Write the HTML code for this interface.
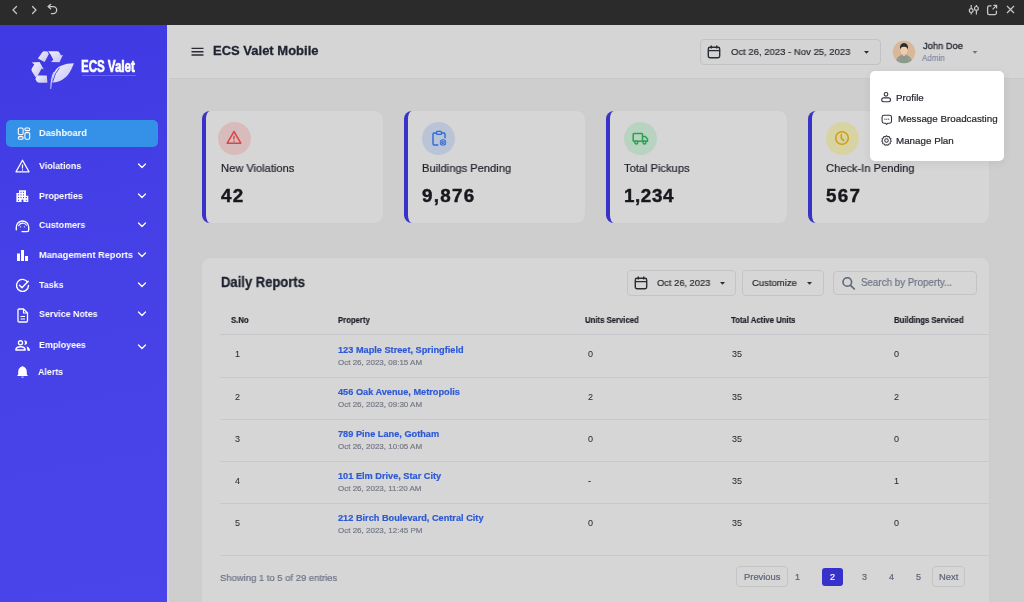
<!DOCTYPE html>
<html><head><meta charset="utf-8"><style>
html,body{margin:0;padding:0;width:1024px;height:602px;overflow:hidden;background:#cdcdcd;font-family:"Liberation Sans", sans-serif;position:relative}
.t{position:absolute;line-height:1;white-space:nowrap;will-change:transform;-webkit-text-stroke:0.2px currentColor}
svg{overflow:visible}
</style></head><body>
<div style="position:absolute;left:0px;top:0px;width:1024px;height:25px;background:#2b2b2b"></div>
<svg style="position:absolute;left:10px;top:4px;" width="10" height="12" viewBox="0 0 10 12"><path d="M6.5 2.5 L3 6 L6.5 9.5" fill="none" stroke="#c8c8c8" stroke-width="1.3" stroke-linecap="round" stroke-linejoin="round"/></svg>
<svg style="position:absolute;left:29px;top:4px;" width="10" height="12" viewBox="0 0 10 12"><path d="M3.5 2.5 L7 6 L3.5 9.5" fill="none" stroke="#c8c8c8" stroke-width="1.3" stroke-linecap="round" stroke-linejoin="round"/></svg>
<svg style="position:absolute;left:45px;top:2px;" width="14" height="14" viewBox="0 0 14 14"><path d="M3.2 4.6 H8.2 A3.5 3.5 0 0 1 8.2 11.6 H6.4" fill="none" stroke="#c8c8c8" stroke-width="1.3" stroke-linecap="round"/><path d="M5.6 2.4 L3.2 4.6 L5.6 6.8" fill="none" stroke="#c8c8c8" stroke-width="1.3" stroke-linecap="round" stroke-linejoin="round"/></svg>
<svg style="position:absolute;left:967px;top:4px;" width="14" height="12" viewBox="0 0 14 12"><path d="M4.2 1 V4.5 M4.2 8.8 V10.5 M9.4 1 V2.5 M9.4 6.8 V10.5" stroke="#c8c8c8" stroke-width="1.2" fill="none"/><circle cx="4.2" cy="6.6" r="1.9" fill="none" stroke="#c8c8c8" stroke-width="1.2"/><circle cx="9.4" cy="4.4" r="1.9" fill="none" stroke="#c8c8c8" stroke-width="1.2"/></svg>
<svg style="position:absolute;left:985px;top:3px;" width="14" height="14" viewBox="0 0 14 14"><path d="M6.5 2.8 H4.2 A1.6 1.6 0 0 0 2.6 4.4 V10 A1.6 1.6 0 0 0 4.2 11.6 H9.8 A1.6 1.6 0 0 0 11.4 10 V7.8" fill="none" stroke="#c8c8c8" stroke-width="1.3"/><path d="M7.6 6.4 L11.4 2.6 M8.4 2.4 H11.6 V5.6" fill="none" stroke="#c8c8c8" stroke-width="1.2"/></svg>
<svg style="position:absolute;left:1005px;top:4px;" width="11" height="11" viewBox="0 0 11 11"><path d="M2 2 L9 9 M9 2 L2 9" stroke="#c8c8c8" stroke-width="1.2"/></svg>
<div style="position:absolute;left:0px;top:25px;width:167px;height:577px;background:linear-gradient(170deg,#3e39e2 0%,#4641e7 45%,#4a45ea 100%)"></div>
<div style="position:absolute;left:167px;top:25px;width:2px;height:577px;background:#d5d5d5"></div>
<svg style="position:absolute;left:28px;top:46px;" width="50" height="46" viewBox="0 0 50 46"><defs><linearGradient id="lg" x1="0" y1="0" x2="1" y2="1"><stop offset="0" stop-color="#f4f3ff"/><stop offset="1" stop-color="#c3c0f2"/></linearGradient></defs>
<g fill="url(#lg)">
<path d="M9.9 12.6 L14.1 6.5 Q15 5.2 16.4 5.2 L19.5 5.4 L20.8 8.2 L16.6 16 Z"/>
<path d="M20 5.2 L29.5 5.2 Q30.8 5.3 31.6 6.8 L33 9.6 L35 8.8 L31.5 16.2 L23 16 L25.3 13.8 L22.6 8.4 Z"/>
<path d="M3.6 16.4 L11.6 16 L15.8 23.4 L13.6 22.4 L9.8 29.4 L7.6 31.2 L4 25.5 Q3 24 3.8 22.4 L6.4 18.2 Z"/>
<path d="M8.9 29.4 L18.8 29.4 L19.4 36.7 L11 36.7 Q9.4 36.7 8.6 35.3 L7.4 33 Z"/>
<path d="M24.3 36.4 C24 29 27 22.5 32.5 20 C37 18 41.5 17.3 46 17.3 C44.5 21 42.8 25.2 40 28.8 C36.8 32.8 31.5 36.6 24.3 36.4 Z"/>
<path d="M22.4 43 Q22.2 33.5 25.3 26 L26 26.3 Q23.4 33.5 23.2 43 Z"/>
</g><path d="M24.8 35.6 Q26.5 27 31.5 21.8" fill="none" stroke="#4a44d8" stroke-width="0.9"/></svg>
<div class="t" style="left:81.3px;top:59.4px;font-size:16px;line-height:1;color:#fff;font-weight:bold;transform:scaleX(0.72);transform-origin:0 0;letter-spacing:0px;-webkit-text-stroke:0.7px #fff">ECS Valet</div>
<div style="position:absolute;left:82px;top:74.5px;width:54px;height:1.5px;background:rgba(230,230,255,0.25)"></div>
<div style="position:absolute;left:6px;top:120px;width:152px;height:27px;background:#3590e8;border-radius:5px"></div>
<svg style="position:absolute;left:17px;top:127px;" width="14" height="13" viewBox="0 0 14 13"><g fill="none" stroke="#fff" stroke-width="1.05"><rect x="1.3" y="1" width="4.8" height="6.6" rx="1.2"/><rect x="1.3" y="9.6" width="4.8" height="2.6" rx="1"/><rect x="7.9" y="1" width="4.8" height="2.6" rx="1"/><rect x="7.9" y="5.6" width="4.8" height="6.6" rx="1.2"/></g></svg>
<div class="t" style="left:39.0px;top:128.07px;font-size:9.6px;color:#ffffff;font-weight:bold;transform:scaleX(0.955);transform-origin:0 0;-webkit-text-stroke:0;">Dashboard</div>
<div class="t" style="left:39.0px;top:161.27px;font-size:9.6px;color:#ffffff;font-weight:bold;transform:scaleX(0.925);transform-origin:0 0;-webkit-text-stroke:0;">Violations</div>
<svg style="position:absolute;left:137px;top:162px;" width="10" height="8" viewBox="0 0 10 8"><path d="M1.5 2 L5 5.5 L8.5 2" fill="none" stroke="#fff" stroke-width="1.3" stroke-linecap="round" stroke-linejoin="round"/></svg>
<div class="t" style="left:39.0px;top:190.87px;font-size:9.6px;color:#ffffff;font-weight:bold;transform:scaleX(0.925);transform-origin:0 0;-webkit-text-stroke:0;">Properties</div>
<svg style="position:absolute;left:137px;top:192px;" width="10" height="8" viewBox="0 0 10 8"><path d="M1.5 2 L5 5.5 L8.5 2" fill="none" stroke="#fff" stroke-width="1.3" stroke-linecap="round" stroke-linejoin="round"/></svg>
<div class="t" style="left:39.0px;top:220.27px;font-size:9.6px;color:#ffffff;font-weight:bold;transform:scaleX(0.925);transform-origin:0 0;-webkit-text-stroke:0;">Customers</div>
<svg style="position:absolute;left:137px;top:221px;" width="10" height="8" viewBox="0 0 10 8"><path d="M1.5 2 L5 5.5 L8.5 2" fill="none" stroke="#fff" stroke-width="1.3" stroke-linecap="round" stroke-linejoin="round"/></svg>
<div class="t" style="left:39.0px;top:249.87px;font-size:9.6px;color:#ffffff;font-weight:bold;transform:scaleX(0.963);transform-origin:0 0;-webkit-text-stroke:0;">Management Reports</div>
<svg style="position:absolute;left:137px;top:251px;" width="10" height="8" viewBox="0 0 10 8"><path d="M1.5 2 L5 5.5 L8.5 2" fill="none" stroke="#fff" stroke-width="1.3" stroke-linecap="round" stroke-linejoin="round"/></svg>
<div class="t" style="left:39.0px;top:279.87px;font-size:9.6px;color:#ffffff;font-weight:bold;transform:scaleX(0.925);transform-origin:0 0;-webkit-text-stroke:0;">Tasks</div>
<svg style="position:absolute;left:137px;top:281px;" width="10" height="8" viewBox="0 0 10 8"><path d="M1.5 2 L5 5.5 L8.5 2" fill="none" stroke="#fff" stroke-width="1.3" stroke-linecap="round" stroke-linejoin="round"/></svg>
<div class="t" style="left:39.0px;top:309.47px;font-size:9.6px;color:#ffffff;font-weight:bold;transform:scaleX(0.925);transform-origin:0 0;-webkit-text-stroke:0;">Service Notes</div>
<svg style="position:absolute;left:137px;top:310px;" width="10" height="8" viewBox="0 0 10 8"><path d="M1.5 2 L5 5.5 L8.5 2" fill="none" stroke="#fff" stroke-width="1.3" stroke-linecap="round" stroke-linejoin="round"/></svg>
<div class="t" style="left:39.0px;top:339.57px;font-size:9.6px;color:#ffffff;font-weight:bold;transform:scaleX(0.925);transform-origin:0 0;-webkit-text-stroke:0;">Employees</div>
<svg style="position:absolute;left:137px;top:343px;" width="10" height="8" viewBox="0 0 10 8"><path d="M1.5 2 L5 5.5 L8.5 2" fill="none" stroke="#fff" stroke-width="1.3" stroke-linecap="round" stroke-linejoin="round"/></svg>
<div class="t" style="left:38.0px;top:366.87px;font-size:9.6px;color:#ffffff;font-weight:bold;transform:scaleX(0.925);transform-origin:0 0;-webkit-text-stroke:0;">Alerts</div>
<svg style="position:absolute;left:15px;top:159px;" width="15" height="14" viewBox="0 0 15 14"><path d="M7.5 1.2 L14 12.8 H1 Z" fill="none" stroke="#fff" stroke-width="1.3" stroke-linejoin="round"/><path d="M7.5 5.5 V9.5" stroke="#fff" stroke-width="1.2"/><circle cx="7.5" cy="11" r="0.7" fill="#fff"/></svg>
<svg style="position:absolute;left:16px;top:189px;" width="13" height="14" viewBox="0 0 13 14"><path d="M0.4 13 V4 H3 V1.2 H10 V6.8 H12.3 V13 Z" fill="#fff"/><g fill="#3f3be3"><rect x="4.45" y="2.75" width="1.1" height="1.1"/><rect x="6.95" y="2.75" width="1.1" height="1.1"/><rect x="1.95" y="5.3500000000000005" width="1.1" height="1.1"/><rect x="4.45" y="5.3500000000000005" width="1.1" height="1.1"/><rect x="6.95" y="5.3500000000000005" width="1.1" height="1.1"/><rect x="1.95" y="8.049999999999999" width="1.1" height="1.1"/><rect x="4.45" y="8.049999999999999" width="1.1" height="1.1"/><rect x="6.95" y="8.049999999999999" width="1.1" height="1.1"/><rect x="9.75" y="8.049999999999999" width="1.1" height="1.1"/><rect x="1.95" y="10.75" width="1.1" height="1.1"/><rect x="9.75" y="10.75" width="1.1" height="1.1"/><rect x="5.6" y="10.6" width="1.8" height="2.5"/></g></svg>
<svg style="position:absolute;left:15px;top:220px;" width="15" height="13" viewBox="0 0 15 13"><path d="M1.3 9.8 V7.2 A6.2 6.2 0 0 1 13.7 7.2 V9.9 Q13.7 11.6 12 11.6 H7" fill="none" stroke="#fff" stroke-width="1.35" stroke-linecap="round"/><path d="M3.6 5.8 Q4.9 3.2 7.2 3.1 M7.6 3 Q10.2 3.3 11.4 5.2" fill="none" stroke="#fff" stroke-width="1.1" stroke-linecap="round"/><circle cx="5.6" cy="6.8" r="0.65" fill="#fff"/><circle cx="9.4" cy="6.8" r="0.65" fill="#fff"/></svg>
<svg style="position:absolute;left:16px;top:249px;" width="13" height="13" viewBox="0 0 13 13"><g fill="#fff"><rect x="1" y="4.5" width="3" height="7.5"/><rect x="5" y="1" width="3" height="11"/><rect x="9" y="7" width="3" height="5"/></g></svg>
<svg style="position:absolute;left:15px;top:278px;" width="15" height="15" viewBox="0 0 15 15"><path d="M12.6 4.2 A6 6 0 1 0 13.5 7.5" fill="none" stroke="#fff" stroke-width="1.4" stroke-linecap="round"/><path d="M4.5 7.2 L7 9.8 L13.2 3.2" fill="none" stroke="#fff" stroke-width="1.4" stroke-linecap="round" stroke-linejoin="round"/></svg>
<svg style="position:absolute;left:16px;top:308px;" width="13" height="15" viewBox="0 0 13 15"><path d="M2 2.2 Q2 1 3.2 1 H7.5 L11.5 5 V12.8 Q11.5 14 10.3 14 H3.2 Q2 14 2 12.8 Z" fill="none" stroke="#fff" stroke-width="1.3" stroke-linejoin="round"/><path d="M7.5 1 V5 H11.5" fill="none" stroke="#fff" stroke-width="1.1"/><path d="M4.5 8.5 H9 M4.5 11 H9" stroke="#fff" stroke-width="1.2"/></svg>
<svg style="position:absolute;left:14px;top:339px;" width="17" height="12" viewBox="0 0 17 12"><circle cx="6.5" cy="3.8" r="2.05" fill="none" stroke="#fff" stroke-width="1.3"/><path d="M1.8 11 Q1.8 7.7 6.5 7.7 Q11.2 7.7 11.2 11 Z" fill="none" stroke="#fff" stroke-width="1.35" stroke-linejoin="round"/><path d="M10.3 1.2 Q13.2 1.6 13.2 3.6 Q13.2 5.7 10.3 6.1 Q11.6 3.6 10.3 1.2 Z" fill="#fff"/><path d="M12.5 7.4 Q16 8 16 11.7 H13.4 Q13.4 9.2 12.5 7.4 Z" fill="#fff"/></svg>
<svg style="position:absolute;left:16px;top:365px;" width="13" height="13" viewBox="0 0 13 13"><path d="M6.5 1 Q6.5 0.5 7 1.5 Q10.8 2.5 10.8 7 V9.5 L12 11 H1 L2.2 9.5 V7 Q2.2 2.5 6 1.5 Z" fill="#fff"/><path d="M5 11.8 Q6.5 13.5 8 11.8 Z" fill="#fff"/></svg>
<div style="position:absolute;left:169px;top:25px;width:855px;height:53px;background:#d5d5d5"></div>
<div style="position:absolute;left:169px;top:78px;width:855px;height:1px;background:#c9c9c9"></div>
<div style="position:absolute;left:169px;top:79px;width:855px;height:523px;background:#cecece"></div>
<svg style="position:absolute;left:190px;top:46px;" width="15" height="11" viewBox="0 0 15 11"><path d="M1.5 2.4 H13.5 M1.5 5.7 H13.5 M1.5 9 H13.5" stroke="#2a2c33" stroke-width="1.35"/></svg>
<div class="t" style="left:212.5px;top:43.80px;font-size:13.0px;color:#1f2230;font-weight:bold;-webkit-text-stroke:0.3px currentColor;">ECS Valet Mobile</div>
<div style="position:absolute;left:700px;top:39px;width:181px;height:26px;border:1px solid #c2c2c2;border-radius:4px;box-sizing:border-box;background:#d4d4d4"></div>
<svg style="position:absolute;left:707px;top:45px;" width="14" height="14" viewBox="0 0 14 14"><rect x="1.3" y="2.3" width="11.4" height="10.4" rx="1.6" fill="none" stroke="#2a2c33" stroke-width="1.4"/><path d="M1.3 5.6 H12.7 M4.3 0.6 V3.5 M9.7 0.6 V3.5" stroke="#2a2c33" stroke-width="1.4"/></svg>
<div class="t" style="left:730.5px;top:46.82px;font-size:9.9px;color:#2a2c33;font-weight:normal;transform:scaleX(0.963);transform-origin:0 0;">Oct 26, 2023 - Nov 25, 2023</div>
<svg style="position:absolute;left:863px;top:50px;" width="7" height="5" viewBox="0 0 7 5"><path d="M1 1 H6 L3.5 3.8 Z" fill="#2a2c33"/></svg>
<svg style="position:absolute;left:892px;top:40px;" width="24" height="24" viewBox="0 0 24 24"><circle cx="12" cy="12" r="11.2" fill="#d8b898"/>
<clipPath id="av"><circle cx="12" cy="12" r="11.2"/></clipPath>
<g clip-path="url(#av)"><path d="M3.5 24 Q4 15 12 14.5 Q20 15 20.5 24 Z" fill="#8c9a8e"/><path d="M10 13 H14 L13 16 H11 Z" fill="#e2bfa2"/><ellipse cx="12" cy="10" rx="3.5" ry="3.9" fill="#efcdb0"/><path d="M8 9.8 Q7.4 3 12 3 Q16.6 3 16 9.8 Q15.2 6.6 12 6.8 Q8.8 6.6 8 9.8 Z" fill="#2b2c30"/><circle cx="7.5" cy="19" r="0.5" fill="#7fe08a"/><circle cx="16.5" cy="19" r="0.5" fill="#7fe08a"/></g></svg>
<div class="t" style="left:922.5px;top:40.97px;font-size:9.6px;color:#2e3139;font-weight:normal;transform:scaleX(0.97);transform-origin:0 0;-webkit-text-stroke:0.35px currentColor;">John Doe</div>
<div class="t" style="left:922.3px;top:53.80px;font-size:8.5px;color:#8088a3;font-weight:normal;transform:scaleX(0.94);transform-origin:0 0;">Admin</div>
<svg style="position:absolute;left:971px;top:50px;" width="8" height="5" viewBox="0 0 8 5"><path d="M1.5 1 H6.5 L4 3.8 Z" fill="#6d7388"/></svg>
<div style="position:absolute;left:202px;top:111px;width:181px;height:112px;background:#d6d6d6;border-radius:8px;border-left:4px solid #3832c8;box-sizing:border-box;box-shadow:0 0 1px rgba(0,0,0,0.06)"></div>
<div style="position:absolute;left:218px;top:122px;width:33px;height:33px;background:#d8bcbc;border-radius:50%"></div>
<div class="t" style="left:221.0px;top:162.83px;font-size:11.3px;color:#1f2128;font-weight:normal;transform:scaleX(0.985);transform-origin:0 0;">New Violations</div>
<div class="t" style="left:221.0px;top:187.29px;font-size:18.8px;color:#17181d;font-weight:bold;letter-spacing:1.3px;-webkit-text-stroke:0.45px currentColor;">42</div>
<div style="position:absolute;left:404px;top:111px;width:181px;height:112px;background:#d6d6d6;border-radius:8px;border-left:4px solid #3832c8;box-sizing:border-box;box-shadow:0 0 1px rgba(0,0,0,0.06)"></div>
<div style="position:absolute;left:422px;top:122px;width:33px;height:33px;background:#b9c5d6;border-radius:50%"></div>
<div class="t" style="left:422.0px;top:162.83px;font-size:11.3px;color:#1f2128;font-weight:normal;transform:scaleX(0.985);transform-origin:0 0;">Buildings Pending</div>
<div class="t" style="left:422.0px;top:187.29px;font-size:18.8px;color:#17181d;font-weight:bold;letter-spacing:1.3px;-webkit-text-stroke:0.45px currentColor;">9,876</div>
<div style="position:absolute;left:606px;top:111px;width:181px;height:112px;background:#d6d6d6;border-radius:8px;border-left:4px solid #3832c8;box-sizing:border-box;box-shadow:0 0 1px rgba(0,0,0,0.06)"></div>
<div style="position:absolute;left:624px;top:122px;width:33px;height:33px;background:#b8d3bf;border-radius:50%"></div>
<div class="t" style="left:624.0px;top:162.83px;font-size:11.3px;color:#1f2128;font-weight:normal;transform:scaleX(0.985);transform-origin:0 0;">Total Pickups</div>
<div class="t" style="left:624.0px;top:187.29px;font-size:18.8px;color:#17181d;font-weight:bold;letter-spacing:0.6px;-webkit-text-stroke:0.45px currentColor;">1,234</div>
<div style="position:absolute;left:808px;top:111px;width:181px;height:112px;background:#d6d6d6;border-radius:8px;border-left:4px solid #3832c8;box-sizing:border-box;box-shadow:0 0 1px rgba(0,0,0,0.06)"></div>
<div style="position:absolute;left:826px;top:122px;width:33px;height:33px;background:#d8d3a2;border-radius:50%"></div>
<div class="t" style="left:826.0px;top:162.83px;font-size:11.3px;color:#1f2128;font-weight:normal;transform:scaleX(0.985);transform-origin:0 0;">Check-In Pending</div>
<div class="t" style="left:826.0px;top:187.29px;font-size:18.8px;color:#17181d;font-weight:bold;letter-spacing:1.3px;-webkit-text-stroke:0.45px currentColor;">567</div>
<svg style="position:absolute;left:226px;top:130px;" width="16" height="15" viewBox="0 0 16 15"><path d="M8 1.5 L14.8 13.2 H1.2 Z" fill="none" stroke="#d64848" stroke-width="1.5" stroke-linejoin="round"/><path d="M8 5.8 V9.4" stroke="#d64848" stroke-width="1.4"/><circle cx="8" cy="11.2" r="0.8" fill="#d64848"/></svg>
<svg style="position:absolute;left:431px;top:130px;" width="16" height="16" viewBox="0 0 16 16"><path d="M5.3 3 H3.2 Q2 3 2 4.2 V13.8 Q2 15 3.2 15 H7.3 M10.7 3 H12.8 Q14 3 14 4.2 V8.3" fill="none" stroke="#2c69d8" stroke-width="1.4"/><rect x="5.5" y="1.4" width="5" height="3" rx="1" fill="none" stroke="#2c69d8" stroke-width="1.3"/><circle cx="12" cy="12.4" r="3.2" fill="#2c69d8"/><circle cx="12" cy="12.4" r="2.1" fill="none" stroke="#b9c5d6" stroke-width="0.6"/><path d="M12 11.2 V12.6 L12.9 13.2" stroke="#b9c5d6" stroke-width="0.7" fill="none"/></svg>
<svg style="position:absolute;left:632px;top:132px;" width="17" height="13" viewBox="0 0 17 13"><rect x="1.2" y="1.5" width="9.3" height="7.8" rx="0.8" fill="none" stroke="#28a250" stroke-width="1.5"/><path d="M10.5 4.5 H13.2 L15.5 7 V9.3 H10.5" fill="none" stroke="#28a250" stroke-width="1.5" stroke-linejoin="round"/><circle cx="4.3" cy="10.5" r="1.5" fill="#b8d3bf" stroke="#28a250" stroke-width="1.4"/><circle cx="12.5" cy="10.5" r="1.5" fill="#b8d3bf" stroke="#28a250" stroke-width="1.4"/></svg>
<svg style="position:absolute;left:834px;top:130px;" width="16" height="16" viewBox="0 0 16 16"><circle cx="8" cy="8" r="6.3" fill="none" stroke="#cf9f14" stroke-width="1.5"/><path d="M7.3 4.5 V8.3 L9.8 10.6" fill="none" stroke="#cf9f14" stroke-width="1.5" stroke-linecap="round"/></svg>
<div style="position:absolute;left:202px;top:258px;width:787px;height:360px;background:#d6d6d6;border-radius:8px;box-shadow:0 0 1px rgba(0,0,0,0.08)"></div>
<div class="t" style="left:220.5px;top:275.15px;font-size:14.0px;color:#1f2230;font-weight:bold;transform:scaleX(0.93);transform-origin:0 0;-webkit-text-stroke:0.3px currentColor;">Daily Reports</div>
<div style="position:absolute;left:627px;top:270px;width:109px;height:26px;border:1px solid #c4c4c4;border-radius:4px;box-sizing:border-box"></div>
<svg style="position:absolute;left:634px;top:276px;" width="14" height="14" viewBox="0 0 14 14"><rect x="1.3" y="2.3" width="11.4" height="10.4" rx="1.6" fill="none" stroke="#2a2c33" stroke-width="1.4"/><path d="M1.3 5.6 H12.7 M4.3 0.6 V3.5 M9.7 0.6 V3.5" stroke="#2a2c33" stroke-width="1.4"/></svg>
<div class="t" style="left:657.0px;top:278.40px;font-size:9.8px;color:#2a2c33;font-weight:normal;transform:scaleX(0.95);transform-origin:0 0;">Oct 26, 2023</div>
<svg style="position:absolute;left:719px;top:281px;" width="7" height="5" viewBox="0 0 7 5"><path d="M1 1 H6 L3.5 3.8 Z" fill="#2a2c33"/></svg>
<div style="position:absolute;left:742px;top:270px;width:82px;height:26px;border:1px solid #c4c4c4;border-radius:4px;box-sizing:border-box"></div>
<div class="t" style="left:752.3px;top:278.20px;font-size:9.8px;color:#2a2c33;font-weight:normal;transform:scaleX(0.97);transform-origin:0 0;">Customize</div>
<svg style="position:absolute;left:806px;top:281px;" width="7" height="5" viewBox="0 0 7 5"><path d="M1 1 H6 L3.5 3.8 Z" fill="#2a2c33"/></svg>
<div style="position:absolute;left:833px;top:271px;width:144px;height:24px;border:1px solid #c4c4c4;border-radius:4px;box-sizing:border-box"></div>
<svg style="position:absolute;left:841px;top:276px;" width="16" height="14" viewBox="0 0 16 14"><circle cx="6.3" cy="6" r="4.3" fill="none" stroke="#5d6577" stroke-width="1.6"/><path d="M9.5 9.3 L13.3 13" stroke="#5d6577" stroke-width="1.7" stroke-linecap="round"/></svg>
<div class="t" style="left:861.0px;top:277.78px;font-size:10.3px;color:#6d7385;font-weight:normal;transform:scaleX(0.95);transform-origin:0 0;">Search by Property...</div>
<div class="t" style="left:231.0px;top:315.94px;font-size:8.7px;color:#1d1f26;font-weight:bold;transform:scaleX(0.89);transform-origin:0 0;">S.No</div>
<div class="t" style="left:338.0px;top:315.94px;font-size:8.7px;color:#1d1f26;font-weight:bold;transform:scaleX(0.89);transform-origin:0 0;">Property</div>
<div class="t" style="left:585.4px;top:315.94px;font-size:8.7px;color:#1d1f26;font-weight:bold;transform:scaleX(0.89);transform-origin:0 0;">Units Serviced</div>
<div class="t" style="left:730.8px;top:315.94px;font-size:8.7px;color:#1d1f26;font-weight:bold;transform:scaleX(0.89);transform-origin:0 0;">Total Active Units</div>
<div class="t" style="left:894.0px;top:315.94px;font-size:8.7px;color:#1d1f26;font-weight:bold;transform:scaleX(0.89);transform-origin:0 0;">Buildings Serviced</div>
<div style="position:absolute;left:220px;top:334px;width:769px;height:1px;background:#c5c7ca"></div>
<div class="t" style="left:234.5px;top:350.48px;font-size:9.0px;color:#2a2c33;font-weight:normal;-webkit-text-stroke:0.05px currentColor;">1</div>
<div class="t" style="left:337.6px;top:345.61px;font-size:9.2px;color:#2d59d6;font-weight:bold;">123 Maple Street, Springfield</div>
<div class="t" style="left:338.0px;top:358.63px;font-size:8.0px;color:#767a86;font-weight:normal;">Oct 26, 2023, 08:15 AM</div>
<div class="t" style="left:588.0px;top:350.48px;font-size:9.0px;color:#2a2c33;font-weight:normal;-webkit-text-stroke:0.05px currentColor;">0</div>
<div class="t" style="left:731.5px;top:350.48px;font-size:9.0px;color:#2a2c33;font-weight:normal;-webkit-text-stroke:0.05px currentColor;">35</div>
<div class="t" style="left:894.0px;top:350.48px;font-size:9.0px;color:#2a2c33;font-weight:normal;-webkit-text-stroke:0.05px currentColor;">0</div>
<div style="position:absolute;left:220px;top:377px;width:769px;height:1px;background:#c8c9cc"></div>
<div class="t" style="left:234.5px;top:392.58px;font-size:9.0px;color:#2a2c33;font-weight:normal;-webkit-text-stroke:0.05px currentColor;">2</div>
<div class="t" style="left:337.6px;top:387.71px;font-size:9.2px;color:#2d59d6;font-weight:bold;">456 Oak Avenue, Metropolis</div>
<div class="t" style="left:338.0px;top:400.73px;font-size:8.0px;color:#767a86;font-weight:normal;">Oct 26, 2023, 09:30 AM</div>
<div class="t" style="left:588.0px;top:392.58px;font-size:9.0px;color:#2a2c33;font-weight:normal;-webkit-text-stroke:0.05px currentColor;">2</div>
<div class="t" style="left:731.5px;top:392.58px;font-size:9.0px;color:#2a2c33;font-weight:normal;-webkit-text-stroke:0.05px currentColor;">35</div>
<div class="t" style="left:894.0px;top:392.58px;font-size:9.0px;color:#2a2c33;font-weight:normal;-webkit-text-stroke:0.05px currentColor;">2</div>
<div style="position:absolute;left:220px;top:419px;width:769px;height:1px;background:#c8c9cc"></div>
<div class="t" style="left:234.5px;top:434.68px;font-size:9.0px;color:#2a2c33;font-weight:normal;-webkit-text-stroke:0.05px currentColor;">3</div>
<div class="t" style="left:337.6px;top:429.81px;font-size:9.2px;color:#2d59d6;font-weight:bold;">789 Pine Lane, Gotham</div>
<div class="t" style="left:338.0px;top:442.83px;font-size:8.0px;color:#767a86;font-weight:normal;">Oct 26, 2023, 10:05 AM</div>
<div class="t" style="left:588.0px;top:434.68px;font-size:9.0px;color:#2a2c33;font-weight:normal;-webkit-text-stroke:0.05px currentColor;">0</div>
<div class="t" style="left:731.5px;top:434.68px;font-size:9.0px;color:#2a2c33;font-weight:normal;-webkit-text-stroke:0.05px currentColor;">35</div>
<div class="t" style="left:894.0px;top:434.68px;font-size:9.0px;color:#2a2c33;font-weight:normal;-webkit-text-stroke:0.05px currentColor;">0</div>
<div style="position:absolute;left:220px;top:461px;width:769px;height:1px;background:#c8c9cc"></div>
<div class="t" style="left:234.5px;top:476.78px;font-size:9.0px;color:#2a2c33;font-weight:normal;-webkit-text-stroke:0.05px currentColor;">4</div>
<div class="t" style="left:337.6px;top:471.91px;font-size:9.2px;color:#2d59d6;font-weight:bold;">101 Elm Drive, Star City</div>
<div class="t" style="left:338.0px;top:484.93px;font-size:8.0px;color:#767a86;font-weight:normal;">Oct 26, 2023, 11:20 AM</div>
<div class="t" style="left:588.0px;top:476.78px;font-size:9.0px;color:#2a2c33;font-weight:normal;-webkit-text-stroke:0.05px currentColor;">-</div>
<div class="t" style="left:731.5px;top:476.78px;font-size:9.0px;color:#2a2c33;font-weight:normal;-webkit-text-stroke:0.05px currentColor;">35</div>
<div class="t" style="left:894.0px;top:476.78px;font-size:9.0px;color:#2a2c33;font-weight:normal;-webkit-text-stroke:0.05px currentColor;">1</div>
<div style="position:absolute;left:220px;top:503px;width:769px;height:1px;background:#c8c9cc"></div>
<div class="t" style="left:234.5px;top:518.88px;font-size:9.0px;color:#2a2c33;font-weight:normal;-webkit-text-stroke:0.05px currentColor;">5</div>
<div class="t" style="left:337.6px;top:514.01px;font-size:9.2px;color:#2d59d6;font-weight:bold;">212 Birch Boulevard, Central City</div>
<div class="t" style="left:338.0px;top:527.03px;font-size:8.0px;color:#767a86;font-weight:normal;">Oct 26, 2023, 12:45 PM</div>
<div class="t" style="left:588.0px;top:518.88px;font-size:9.0px;color:#2a2c33;font-weight:normal;-webkit-text-stroke:0.05px currentColor;">0</div>
<div class="t" style="left:731.5px;top:518.88px;font-size:9.0px;color:#2a2c33;font-weight:normal;-webkit-text-stroke:0.05px currentColor;">35</div>
<div class="t" style="left:894.0px;top:518.88px;font-size:9.0px;color:#2a2c33;font-weight:normal;-webkit-text-stroke:0.05px currentColor;">0</div>
<div style="position:absolute;left:220px;top:555px;width:769px;height:1px;background:#c8c9cc"></div>
<div class="t" style="left:220.0px;top:572.50px;font-size:9.8px;color:#6d7184;font-weight:normal;transform:scaleX(0.965);transform-origin:0 0;">Showing 1 to 5 of 29 entries</div>
<div style="position:absolute;left:736px;top:566px;width:52px;height:21px;border:1px solid #c4c4c4;border-radius:4px;box-sizing:border-box"></div>
<div class="t" style="left:743.7px;top:571.94px;font-size:9.4px;color:#5d6377;font-weight:normal;">Previous</div>
<div class="t" style="left:795.0px;top:572.88px;font-size:9.0px;color:#5d6377;font-weight:normal;">1</div>
<div style="position:absolute;left:822px;top:568px;width:21px;height:18px;background:#3631c9;border-radius:3px"></div>
<div class="t" style="left:829.5px;top:572.88px;font-size:9.0px;color:#ffffff;font-weight:normal;">2</div>
<div class="t" style="left:862.0px;top:572.88px;font-size:9.0px;color:#5d6377;font-weight:normal;">3</div>
<div class="t" style="left:888.5px;top:572.88px;font-size:9.0px;color:#5d6377;font-weight:normal;">4</div>
<div class="t" style="left:916.0px;top:572.88px;font-size:9.0px;color:#5d6377;font-weight:normal;">5</div>
<div style="position:absolute;left:932px;top:566px;width:33px;height:21px;border:1px solid #c4c4c4;border-radius:4px;box-sizing:border-box"></div>
<div class="t" style="left:938.5px;top:571.94px;font-size:9.4px;color:#5d6377;font-weight:normal;">Next</div>
<div style="position:absolute;left:870px;top:71px;width:134px;height:90px;background:#ffffff;border-radius:5px;box-shadow:0 2px 10px rgba(0,0,0,0.07)"></div>
<svg style="position:absolute;left:879px;top:91px;" width="14" height="13" viewBox="0 0 14 13"><circle cx="7" cy="3.3" r="1.85" fill="none" stroke="#33363f" stroke-width="1.1"/><rect x="2.7" y="6.9" width="8.8" height="3.9" rx="1.95" fill="none" stroke="#33363f" stroke-width="1.1"/></svg>
<div class="t" style="left:896.0px;top:92.90px;font-size:9.8px;color:#24262d;font-weight:normal;">Profile</div>
<svg style="position:absolute;left:879px;top:112px;" width="15" height="14" viewBox="0 0 15 14"><path d="M5 3.2 H10.6 Q12.5 3.2 12.5 5.1 V9.3 Q12.5 11.2 10.6 11.2 H8.8 L7.6 12.4 L6.4 11.2 H5 Q3.1 11.2 3.1 9.3 V5.1 Q3.1 3.2 5 3.2 Z" fill="none" stroke="#33363f" stroke-width="1.1" stroke-linejoin="round"/><circle cx="5.9" cy="7.2" r="0.6" fill="#33363f"/><circle cx="7.8" cy="7.2" r="0.6" fill="#33363f"/><circle cx="9.7" cy="7.2" r="0.6" fill="#33363f"/></svg>
<div class="t" style="left:898.0px;top:114.20px;font-size:9.8px;color:#24262d;font-weight:normal;">Message Broadcasting</div>
<svg style="position:absolute;left:879px;top:134px;" width="15" height="14" viewBox="0 0 15 14"><g transform="translate(7.5 6.5) scale(0.84) translate(-7 -7)"><path d="M7 1.3 L8.3 2.6 L10.1 2.2 L10.6 4 L12.3 4.7 L11.8 6.5 L12.7 7.8 L11.4 9.1 L11.5 11 L9.7 11.2 L8.7 12.7 L7 12 L5.3 12.7 L4.3 11.2 L2.5 11 L2.6 9.1 L1.3 7.8 L2.2 6.5 L1.7 4.7 L3.4 4 L3.9 2.2 L5.7 2.6 Z" fill="none" stroke="#33363f" stroke-width="1.2" stroke-linejoin="round"/><circle cx="7" cy="7" r="2.1" fill="none" stroke="#33363f" stroke-width="1.2"/></g></svg>
<div class="t" style="left:896.0px;top:135.70px;font-size:9.8px;color:#24262d;font-weight:normal;">Manage Plan</div>
</body></html>
